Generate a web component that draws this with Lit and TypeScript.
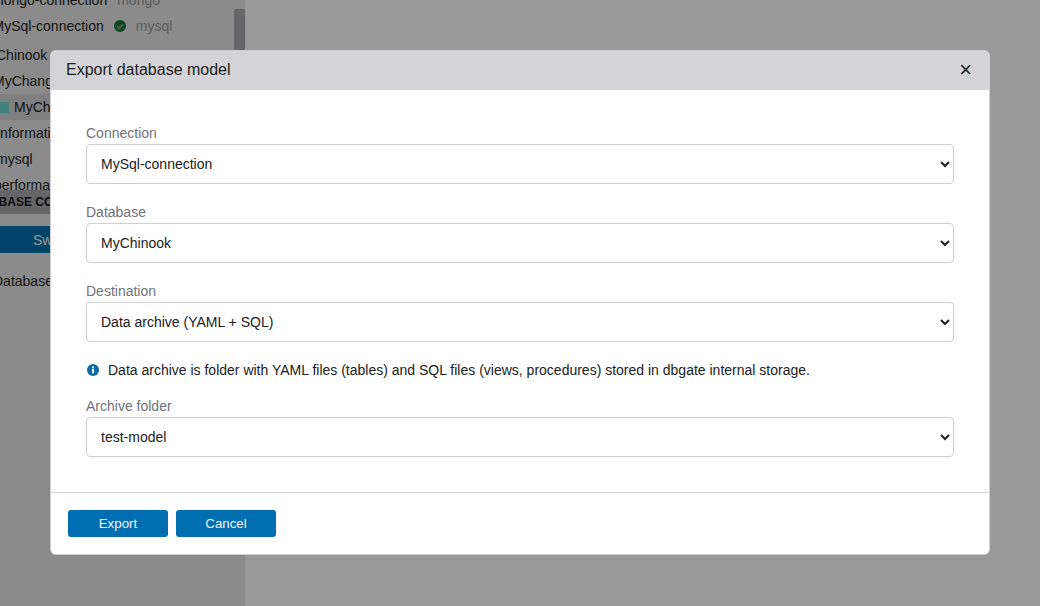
import { LitElement, html, css } from "lit";
import { customElement } from "lit/decorators.js";

const check = html`<svg class="ok" viewBox="0 0 24 24" width="12" height="12"><circle cx="12" cy="12" r="12" fill="#0f7a35"/><path d="M6 12.5l4.2 4.2L18 8.8" fill="none" stroke="#9a9a9a" stroke-width="3.4"/></svg>`;
const info = html`<svg class="nicon" viewBox="0 0 24 24" width="12" height="12"><circle cx="12" cy="12" r="12" fill="#0b6aa8"/><rect x="10" y="10" width="4" height="8.6" fill="#fff"/><rect x="10" y="5" width="4" height="3.6" fill="#fff"/></svg>`;

@customElement("app-root")
export class AppRoot extends LitElement {
  static styles = css`
    :host { display: block; width: 1040px; height: 606px; position: relative; overflow: hidden; font-family: "Liberation Sans", Arial, sans-serif; font-size: 14px; color: #262626; background: #fff; }
    .side { width: 245px; height: 606px; background: #e8e8e8; display: flex; flex-direction: column; overflow: hidden; position: relative; }
    .tree { height: 203px; margin-top: -13px; flex: none; display: flex; flex-direction: column; overflow: hidden; }
    .row { height: 26px; flex: none; display: flex; align-items: center; gap: 10px; white-space: nowrap; color: #1c1c1c; }
    .row.mt { margin-top: 3px; }
    .row.sel { background: #d4d4d4; gap: 5px; }
    .muted { color: #9a9a9a; }
    .swatch { width: 9px; height: 11px; background: #6fd8cc; flex: none; }
    .o8 { margin-left: -8px; }
    .o75 { margin-left: -7.5px; }
    .o7 { margin-left: -7px; }
    .o6 { margin-left: -6px; }
    .o4 { margin-left: -4px; }
    .o3 { margin-left: -3px; }
    .scroll { position: absolute; right: 0; top: 9px; width: 11px; height: 180px; background: #aaa8b0; }
    .hdr { height: 24px; flex: none; background: #a8a8ac; font-weight: 700; font-size: 12px; display: flex; align-items: center; white-space: nowrap; color: #111; }
    .hdr span { margin-left: -33px; }
    .swbtn { height: 27px; margin-top: 12px; background: #0070b0; flex: none; color: #fff; display: flex; align-items: center; padding-left: 33px; }
    .db { margin: 15px 0 0 -7px; white-space: nowrap; color: #1c1c1c; height: 26px; display: flex; align-items: center; }
    .overlay { position: absolute; inset: 0; background: rgba(0,0,0,.4); }
    .modal { position: absolute; left: 50px; top: 50px; width: 940px; height: 505px; background: #fff; border-radius: 6px; overflow: hidden; display: flex; flex-direction: column; box-sizing: border-box; border: 1px solid #d0d0d4; }
    .head { height: 39px; box-sizing: border-box; flex: none; background: #d4d4d8; display: flex; align-items: center; justify-content: space-between; padding: 0 15px 2px; font-size: 16px; color: #212121; }
    .close { font-size: 22px; line-height: 20px; color: #1a1a1a; margin-right: 2px; }
    .body { flex: 1; padding: 34px 35px 0 35px; display: flex; flex-direction: column; }
    .field { display: flex; flex-direction: column; margin-bottom: 19px; }
    .field label { color: #6f727a; line-height: 19px; height: 20px; }
    select { height: 40px; box-sizing: border-box; border: 1px solid #d0d0d0; border-radius: 4px; background: #fff; color: #212121; font: 14px "Liberation Sans", Arial, sans-serif; padding: 0 11px 0 10px; width: 100%; outline: none; }
    .note { display: flex; align-items: center; gap: 9px; height: 17px; margin-bottom: 19px; color: #212121; }
    .nicon { margin: 1px 0 0 1px; flex: none; }
    .foot { height: 62px; box-sizing: border-box; flex: none; border-top: 1px solid #d4d4d4; display: flex; align-items: flex-start; gap: 8px; padding: 17px 0 0 17px; }
    .btn { width: 100px; height: 27px; background: #006eb0; color: #f0f4f8; border: 0; border-radius: 3px; font: 13.333px "Liberation Sans", Arial, sans-serif; padding: 0; }
  `;

  private field(label: string, value: string) {
    return html`<div class="field"><label>${label}</label><select><option>${value}</option></select></div>`;
  }

  render() {
    return html`
      <div class="side">
        <div class="tree">
          <div class="row"><span class="o8">mongo-connection</span><span class="muted">mongo</span></div>
          <div class="row"><span class="o75">MySql-connection</span>${check}<span class="muted">mysql</span></div>
          <div class="row mt"><span class="o4">Chinook</span></div>
          <div class="row"><span class="o7">MyChange</span></div>
          <div class="row sel"><i class="swatch"></i><span>MyChinook</span></div>
          <div class="row"><span class="o3">information_schema</span></div>
          <div class="row"><span class="o4">mysql</span></div>
          <div class="row"><span class="o6">performance_schema</span></div>
        </div>
        <div class="hdr"><span>DATABASE CONTENT</span></div>
        <div class="swbtn">Switch</div>
        <div class="db">Database</div>
        <div class="scroll"></div>
      </div>
      <div class="overlay"></div>
      <div class="modal">
        <div class="head"><span>Export database model</span><span class="close">×</span></div>
        <div class="body">
          ${this.field("Connection", "MySql-connection")}
          ${this.field("Database", "MyChinook")}
          ${this.field("Destination", "Data archive (YAML + SQL)")}
          <div class="note">${info}<span>Data archive is folder with YAML files (tables) and SQL files (views, procedures) stored in dbgate internal storage.</span></div>
          ${this.field("Archive folder", "test-model")}
        </div>
        <div class="foot"><button class="btn">Export</button><button class="btn">Cancel</button></div>
      </div>`;
  }
}
